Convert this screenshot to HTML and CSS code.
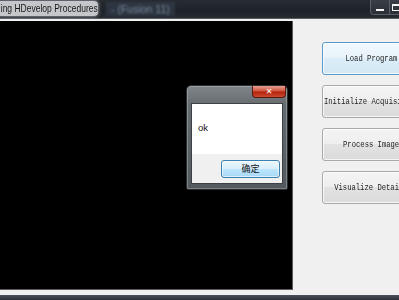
FILE: index.html
```html
<!DOCTYPE html>
<html>
<head>
<meta charset="utf-8">
<link rel="stylesheet" href="styles.css">
</head>
<body>
<div class="window">
  <div class="titlebar">
    <span class="title"><span class="title-text">ing HDevelop Procedures</span></span>
    <span class="blurred">- (Fusion 11)</span>
    <span class="spacer"></span>
    <span class="ctl min"><span class="dash"></span></span>
    <span class="ctl max"><span class="box"></span></span>
  </div>
  <div class="client">
    <div class="canvas"></div>
    <div class="panel">
      <button class="btn focused"><span class="lbl">Load Program</span></button>
      <button class="btn"><span class="lbl">Initialize Acquisition</span></button>
      <button class="btn"><span class="lbl">Process Image</span></button>
      <button class="btn"><span class="lbl">Visualize Details</span></button>
    </div>
  </div>
  <div class="taskbar"></div>
</div>

<div class="dialog">
  <div class="dlg-title">
    <span class="close">&#x2715;</span>
  </div>
  <div class="dlg-body">
    <div class="dlg-msg">ok</div>
    <div class="dlg-foot"><button class="okbtn">确定</button></div>
  </div>
</div>
</body>
</html>
```

FILE: styles.css
```css
* { box-sizing: border-box; }
html, body { margin: 0; padding: 0; }
body {
  width: 399px;
  height: 300px;
  overflow: hidden;
  background: #f0f0f0;
  font-family: "Open Sans", "Liberation Sans", sans-serif;
  position: relative;
}
.window { display: flex; flex-direction: column; height: 300px; }
.titlebar {
  height: 19px;
  display: flex;
  align-items: flex-start;
  background: linear-gradient(to bottom, #272c33 0%, #1e232a 60%, #262b31 100%);
  border-bottom: 1px solid #5a5f66;
}
.title {
  flex: none;
  margin-top: 1px;
  width: 98px;
  height: 15px;
  background: rgba(214, 216, 219, 0.9);
  border-radius: 0 4px 4px 0;
  box-shadow: 0 0 3px 1px rgba(200,203,207,0.55);
  overflow: hidden;
  white-space: nowrap;
}
.title-text {
  display: block;
  color: #161616;
  font-family: "Liberation Sans", sans-serif;
  font-size: 11.5px;
  line-height: 15px;
  transform: scaleX(0.74);
  transform-origin: 0 50%;
  padding-left: 1px;
}
.blurred {
  flex: none;
  margin: 2px 0 0 8px;
  height: 14px;
  padding: 0 5px;
  font-family: "Liberation Sans", sans-serif;
  font-size: 10.5px;
  line-height: 14px;
  color: #7d8ba0;
  background: rgba(55, 66, 82, 0.55);
  filter: blur(1.2px);
  white-space: nowrap;
}
.spacer { flex: 1; }
.ctl {
  height: 15px;
  border: 1px solid #5b6068;
  border-top: none;
  background: linear-gradient(to bottom, #3a3f46, #2a2f36);
  display: flex;
  align-items: center;
  justify-content: center;
}
.min { width: 20px; border-radius: 0 0 0 4px; }
.max { width: 11px; margin-right: -2px; border-left: none; }
.dash { width: 8px; height: 2px; background: #f4f4f4; margin-top: 5px; }
.box { width: 9px; height: 7px; border: 1px solid #f4f4f4; border-top-width: 2px; margin-left: 2px; }

.client {
  display: flex;
  padding-top: 2px;
  height: 276px;
  background: #f0f0f0;
}
.canvas {
  width: 293px;
  height: 269px;
  background: #000;
  border-right: 1px solid #5a5a5a;
  border-bottom: 1px solid #5a5a5a;
}
.panel {
  flex: 1;
  display: flex;
  flex-direction: column;
  gap: 10px;
  padding: 21px 0 0 29px;
  overflow: hidden;
}
.btn {
  flex: none;
  width: 98px;
  height: 33px;
  margin: 0;
  padding: 0;
  border: 1px solid #a9a9a9;
  border-radius: 3px;
  background: linear-gradient(to bottom, #f4f4f4 0%, #eeeeee 49%, #e2e2e2 50%, #dbdbdb 100%);
  display: flex;
  align-items: center;
  justify-content: center;
  white-space: nowrap;
  overflow: hidden;
  box-shadow: inset 0 0 0 1px rgba(255,255,255,0.75);
}
.lbl {
  flex: none;
  display: block;
  font-family: "Liberation Mono", monospace;
  font-size: 9px;
  color: #1e1e1e;
  transform: scaleX(0.8);
  transform-origin: 50% 50%;
}
.btn.focused {
  border-color: #5a9ac8;
  background: linear-gradient(to bottom, #f1f8fd 0%, #e8f3fa 49%, #dbedf8 50%, #d3e8f5 100%);
}
.taskbar {
  flex: 1;
  background: linear-gradient(to bottom, #4a5158, #2b3137);
}

.dialog {
  position: absolute;
  left: 186px;
  top: 85px;
  width: 102px;
  height: 105px;
  border: 1px solid #2a2d30;
  border-radius: 5px 5px 2px 2px;
  background: linear-gradient(to bottom, #80858a 0%, #676c70 18%, #5d6266 60%, #54595d 100%);
  box-shadow: inset 0 0 0 1px rgba(200,205,210,0.35);
  display: flex;
  flex-direction: column;
  padding: 0 4px 5px 4px;
}
.dlg-title {
  height: 17px;
  display: flex;
  justify-content: flex-end;
  align-items: flex-start;
}
.close {
  width: 34px;
  height: 12px;
  margin-right: -3px;
  background: linear-gradient(to bottom, #e8a093 0%, #d0553f 45%, #b5230d 55%, #c94a30 100%);
  border: 1px solid #5a1a10;
  border-top: none;
  border-radius: 0 0 4px 4px;
  color: #fff;
  font-family: "DejaVu Sans", sans-serif;
  font-size: 8px;
  font-weight: bold;
  line-height: 11px;
  text-align: center;
}
.dlg-body {
  flex: 1;
  display: flex;
  flex-direction: column;
  border: 1px solid #3d4145;
  background: #fff;
}
.dlg-msg {
  flex: 1;
  padding: 18px 0 0 6px;
  font-family: "Liberation Sans", sans-serif;
  font-size: 9.5px;
  color: #111;
}
.dlg-foot {
  height: 29px;
  background: #f0f0f0;
  display: flex;
  justify-content: flex-end;
  align-items: center;
  padding-right: 2px;
}
.okbtn {
  width: 59px;
  height: 18px;
  margin: 0;
  padding: 0;
  border: 1px solid #3c7fb1;
  border-radius: 3px;
  background: linear-gradient(to bottom, #eaf6fd 0%, #d9f0fc 49%, #bee6fd 50%, #a7d9f5 100%);
  box-shadow: inset 0 0 0 1px rgba(255,255,255,0.6);
  font-family: "Noto Sans CJK SC", sans-serif;
  font-size: 9px;
  line-height: 14px;
  color: #111;
}
```
